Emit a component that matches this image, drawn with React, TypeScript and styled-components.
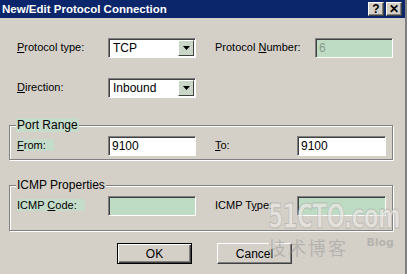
import styled, { createGlobalStyle } from "styled-components";

const GlobalStyle = createGlobalStyle`
  html, body {
    margin: 0;
    padding: 0;
    background: #d4d0c8;
  }
`;

const StyledWindow = styled.div`
  position: relative;
  width: 407px;
  height: 274px;
  box-sizing: border-box;
  background: #d4d0c8;
  border-right: 2px solid #808080;
  font-family: "Liberation Sans", Arial, sans-serif;
  font-size: 11px;
  color: #000;
  overflow: hidden;
`;

const StyledTitleBar = styled.div`
  height: 18px;
  display: flex;
  align-items: center;
  justify-content: space-between;
  padding: 0 3px 0 2px;
  background: #0b266b;
  color: #fff;
  font-weight: bold;
  font-size: 11.5px;
`;

const StyledTitleButtons = styled.div`
  display: flex;
  gap: 2px;
`;

const StyledTitleButton = styled.div`
  width: 16px;
  height: 14px;
  box-sizing: border-box;
  display: flex;
  align-items: center;
  justify-content: center;
  background: #d4d0c8;
  color: #000;
  font-weight: bold;
  font-size: 12px;
  border: 1px solid;
  border-color: #fff #404040 #404040 #fff;
  box-shadow: inset -1px -1px #808080;
`;

const StyledBody = styled.div`
  display: flex;
  flex-direction: column;
  padding: 20px 12px 0 9px;
`;

const StyledRow = styled.div<{ $last?: string }>`
  display: grid;
  grid-template-columns: 91px 88px 19px ${({ $last }) => $last ?? "100px 78px"};
  align-items: center;
  height: 20px;
  padding-left: 8px;
  margin-bottom: 20px;
`;

const StyledLabel = styled.span<{ $tint?: boolean }>`
  justify-self: start;
  white-space: nowrap;
  padding-right: ${({ $tint }) => ($tint ? "8px" : "0")};
  background: ${({ $tint }) => ($tint ? "#c6dccb" : "transparent")};
  margin-top: -2px;

  u {
    text-decoration: underline;
    text-underline-offset: 1px;
  }
`;

const StyledSelect = styled.div`
  height: 20px;
  box-sizing: border-box;
  display: flex;
  align-items: center;
  background: #fff;
  border: 1px solid;
  border-color: #808080 #fff #fff #808080;
  box-shadow: inset 1px 1px #404040;
  padding: 1px 1px 1px 4px;
`;

const StyledSelectValue = styled.span`
  flex: 1;
  font-size: 12px;
`;

const StyledArrowButton = styled.div`
  width: 16px;
  height: 16px;
  box-sizing: border-box;
  display: flex;
  align-items: center;
  justify-content: center;
  background: #c9d6c8;
  border: 1px solid;
  border-color: #fff #404040 #404040 #fff;
`;

const StyledInput = styled.div<{ $disabled?: boolean }>`
  height: 20px;
  box-sizing: border-box;
  display: flex;
  align-items: center;
  padding-left: 3px;
  font-size: 12px;
  background: ${({ $disabled }) => ($disabled ? "#bddcc3" : "#fff")};
  color: ${({ $disabled }) => ($disabled ? "#8a9a8c" : "#000")};
  border: 1px solid;
  border-color: #808080 #fff #fff #808080;
  box-shadow: inset 1px 1px #404040;
`;

const StyledGroup = styled.fieldset<{ $height: number }>`
  margin: 0 0 18px 0;
  padding: 4px 0 0 0;
  height: ${({ $height }) => $height}px;
  box-sizing: border-box;
  border: 1px solid #808080;
  box-shadow: 1px 1px #fff, inset 1px 1px #fff;
  min-width: 0;

  ${StyledRow} {
    padding-left: 7px;
    margin-bottom: 0;
  }
`;

const StyledLegend = styled.legend<{ $tint?: boolean }>`
  padding: 0 1px;
  margin-left: 6px;
  font-size: 12px;
  background: ${({ $tint }) => ($tint ? "#c6dccb" : "#d4d0c8")};
`;

const StyledButtonBar = styled.div`
  display: flex;
  gap: 25px;
  padding-left: 108px;
  margin-top: -6px;
`;

const StyledButton = styled.div<{ $default?: boolean }>`
  width: 75px;
  height: 21px;
  box-sizing: border-box;
  display: flex;
  align-items: center;
  justify-content: center;
  font-size: 12px;
  background: #d4d0c8;
  border: 1px solid;
  border-color: ${({ $default }) =>
    $default ? "#000" : "#fff #404040 #404040 #fff"};
  box-shadow: ${({ $default }) =>
    $default
      ? "inset 1px 1px #fff, inset -1px -1px #404040, inset -2px -2px #808080"
      : "inset -1px -1px #808080"};
`;

const StyledWatermark = styled.div`
  position: absolute;
  left: 268px;
  top: 199px;
  width: 128px;
  display: flex;
  flex-direction: column;
  pointer-events: none;
`;

const StyledMark = styled.span`
  font-family: "DejaVu Sans", sans-serif;
  font-weight: bold;
  font-size: 33px;
  line-height: 36px;
  letter-spacing: -1px;
  color: rgba(236, 234, 230, 0.7);
  -webkit-text-stroke: 1px rgba(160, 160, 160, 0.55);
  transform: scaleX(0.66);
  transform-origin: left;
  white-space: nowrap;
`;

const StyledMarkSub = styled.div`
  display: flex;
  align-items: flex-start;
  justify-content: space-between;
  margin-top: 2px;
  color: rgba(150, 150, 150, 0.5);
`;

const StyledMarkCn = styled.span`
  font-family: "Noto Sans CJK SC", sans-serif;
  font-size: 18px;
  line-height: 20px;
  letter-spacing: 2px;
`;

const StyledMarkBlog = styled.span`
  font-family: "DejaVu Sans", sans-serif;
  font-weight: bold;
  font-size: 11px;
  line-height: 12px;
  margin-right: 2px;
`;

const DropArrow = () => (
  <svg width="7" height="4" viewBox="0 0 7 4">
    <path d="M0 0h7L3.5 4z" fill="#000" />
  </svg>
);

const Select = ({ value }: { value: string }) => (
  <StyledSelect>
    <StyledSelectValue>{value}</StyledSelectValue>
    <StyledArrowButton>
      <DropArrow />
    </StyledArrowButton>
  </StyledSelect>
);

const App = () => (
  <StyledWindow>
    <GlobalStyle />
    <StyledTitleBar>
      <span>New/Edit Protocol Connection</span>
      <StyledTitleButtons>
        <StyledTitleButton>?</StyledTitleButton>
        <StyledTitleButton>✕</StyledTitleButton>
      </StyledTitleButtons>
    </StyledTitleBar>

    <StyledBody>
      <StyledRow>
        <StyledLabel>
          <u>P</u>rotocol type:
        </StyledLabel>
        <Select value="TCP" />
        <span />
        <StyledLabel>
          Protocol <u>N</u>umber:
        </StyledLabel>
        <StyledInput $disabled>6</StyledInput>
      </StyledRow>

      <StyledRow>
        <StyledLabel>
          <u>D</u>irection:
        </StyledLabel>
        <Select value="Inbound" />
      </StyledRow>

      <StyledGroup $height={42}>
        <StyledLegend $tint>Port Range</StyledLegend>
        <StyledRow $last="82px 89px">
          <StyledLabel $tint>
            <u>F</u>rom:
          </StyledLabel>
          <StyledInput>9100</StyledInput>
          <span />
          <StyledLabel>
            <u>T</u>o:
          </StyledLabel>
          <StyledInput>9100</StyledInput>
        </StyledRow>
      </StyledGroup>

      <StyledGroup $height={53}>
        <StyledLegend>ICMP Properties</StyledLegend>
        <StyledRow $last="82px 89px">
          <StyledLabel $tint>
            ICMP <u>C</u>ode:
          </StyledLabel>
          <StyledInput $disabled />
          <span />
          <StyledLabel>
            ICMP T<u>y</u>pe:
          </StyledLabel>
          <StyledInput $disabled />
        </StyledRow>
      </StyledGroup>

      <StyledButtonBar>
        <StyledButton $default>OK</StyledButton>
        <StyledButton>Cancel</StyledButton>
      </StyledButtonBar>
    </StyledBody>

    <StyledWatermark>
      <StyledMark>51CTO.com</StyledMark>
      <StyledMarkSub>
        <StyledMarkCn>技术博客</StyledMarkCn>
        <StyledMarkBlog>Blog</StyledMarkBlog>
      </StyledMarkSub>
    </StyledWatermark>
  </StyledWindow>
);

export default App;
